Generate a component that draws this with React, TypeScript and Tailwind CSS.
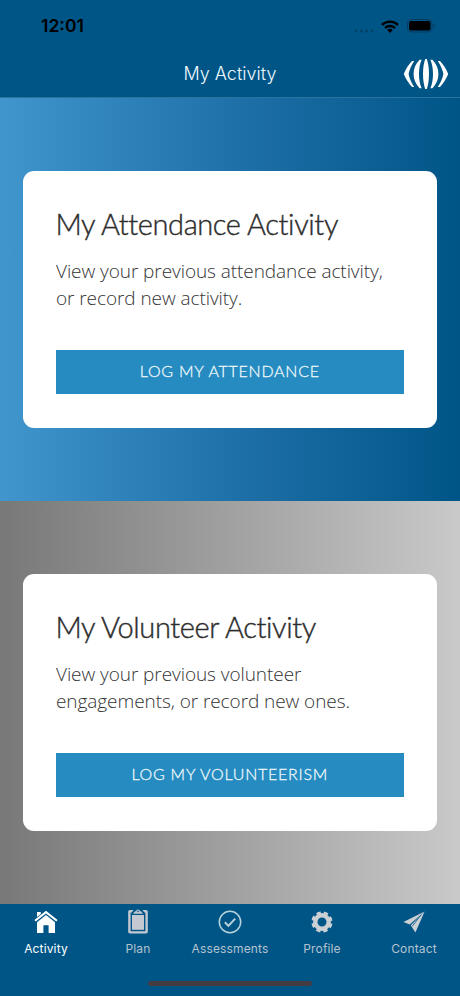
import type { ReactNode } from 'react'

interface ActivityCardProps {
  title: string
  lines: string[]
  action: string
}

function ActivityCard({ title, lines, action }: ActivityCardProps) {
  return (
    <div className="h-[257px] w-full rounded-[11px] bg-white px-[33px] pt-[34px]">
      <h2 className="font-['Lato',sans-serif] text-[29px] leading-[38px] font-light tracking-[-0.4px] whitespace-nowrap text-[#2d2d2d] [-webkit-text-stroke:0.4px_#2d2d2d]">{title}</h2>
      <p className="mt-[15px] ml-[0.5px] font-['Open_Sans',sans-serif] text-[19px] leading-[27px] font-light tracking-[-0.07px] whitespace-nowrap text-[#333333]">
        {lines.map((line) => (
          <span key={line} className="block">{line}</span>
        ))}
      </p>
      <button className="mt-[38px] flex h-[44px] w-full items-center justify-center bg-[#258bc0] pb-[2px] font-['Lato',sans-serif] text-[16px] font-light tracking-[0.75px] whitespace-nowrap text-[#eef8fc] [-webkit-text-stroke:0.3px_#eef8fc]">
        {action}
      </button>
    </div>
  )
}

function StatusIcons() {
  return (
    <div className="flex items-center">
      <svg width="20" height="4" viewBox="0 0 20 4" className="mt-[9px] mr-[7px]" fill="#04406a">
        <circle cx="2" cy="2" r="1.5" />
        <circle cx="7.3" cy="2" r="1.5" />
        <circle cx="12.6" cy="2" r="1.5" />
        <circle cx="17.9" cy="2" r="1.5" />
      </svg>
      <svg width="18" height="13" viewBox="0 0 18 13" className="mr-[8px]" fill="none" stroke="#000" strokeWidth="2.4">
        <path d="M1 4.9a11.4 11.4 0 0 1 16 0" />
        <path d="M4 8a7.1 7.1 0 0 1 10 0" />
        <path d="M9 13 6.2 10.1a4 4 0 0 1 5.6 0z" fill="#000" stroke="none" />
      </svg>
      <svg width="29" height="14" viewBox="0 0 29 14">
        <rect x="0.5" y="0.5" width="24.5" height="12.5" rx="3.6" fill="none" stroke="#043c61" />
        <rect x="2" y="2" width="21.5" height="9.5" rx="2" fill="#000" />
        <path d="M26.6 4.6c1.8.8 1.8 3.6 0 4.4z" fill="#043c61" />
      </svg>
    </div>
  )
}

function Logo() {
  return (
    <svg width="46" height="32" viewBox="0 0 46 32" fill="#fff">
      <path d="M22.2 1h1.6C25.2 5 26 10 26 16s-.8 11-2.2 15h-1.6C20.8 27 20 22 20 16s.8-11 2.2-15z" />
      <path d="M16.6 1.8h2C16.8 6 16 11 16 16s.8 10 2.6 14.2h-2C12.6 26 10.6 21.5 10.6 16s2-10 6-14.2z" />
      <path d="M29.4 1.8h-2C29.2 6 30 11 30 16s-.8 10-2.6 14.2h2c4-4.2 6-8.7 6-14.2s-2-10-6-14.2z" />
      <path d="M9 3h2.2C8.4 7.5 6.4 11.5 5.6 16c.8 4.500 2.800 8.500 5.600 13H9C5.500 25.200 2.600 20.800.8 16 2.600 11.200 5.500 6.800 9 3z" />
      <path d="M37 3h-2.200c2.800 4.500 4.800 8.500 5.600 13-.8 4.500-2.800 8.500-5.600 13H37c3.500-3.800 6.400-8.200 8.200-13C43.400 11.200 40.500 6.800 37 3z" />
    </svg>
  )
}

const homeIcon = (
  <svg width="24" height="24" viewBox="0 0 24 24" fill="#fff">
    <path d="M12 .7.4 10.1l1.3 1.5L12 3.4l10.3 8.2 1.3-1.5z" />
    <path d="M3 2h3.800v1.900L3 7z" />
    <path d="M12 5.100 3 12.200V23h6.400v-7.800h5.200V23H21V12.200z" />
  </svg>
)

const planIcon = (
  <svg width="20" height="25" viewBox="0 0 20 25" fill="#c4c9d1">
    <path fillRule="evenodd" d="M2 1h3.5L3.7 3.6H2.6v18.6h14.8V3.6h-1.1L14.5 1H18c1.1 0 1.8.8 1.8 1.8v20c0 1-.7 1.7-1.8 1.7H2c-1.1 0-1.8-.7-1.8-1.7v-20C.2 1.8.9 1 2 1z" />
    <path d="M4 6h12v14.8H4z" />
    <path fillRule="evenodd" d="M5 4.8 7 2.3h1C8.2 1.2 9 .4 10 .4s1.8.8 2 1.9h1l2 2.5zM10 1.6a.8.8 0 1 0 0 1.6.8.8 0 0 0 0-1.6z" />
  </svg>
)

const assessmentsIcon = (
  <svg width="24" height="24" viewBox="0 0 24 24" fill="none" stroke="#b9d3dd">
    <circle cx="12" cy="12" r="10.7" strokeWidth="1.5" />
    <path d="m6.8 12.3 3.6 3.5 6.8-7.2" strokeWidth="1.9" />
  </svg>
)

const profileIcon = (
  <svg width="22" height="22" viewBox="0 0 22 22" fill="none" stroke="#cbd0d5">
    <circle cx="11" cy="11" r="6.7" strokeWidth="4.4" />
    <circle cx="11" cy="11" r="9.3" strokeWidth="2.6" strokeDasharray="4.3 3.004" strokeDashoffset="-1.5" />
  </svg>
)

const contactIcon = (
  <svg width="22" height="22" viewBox="0 0 22 22" fill="#cbd0d5">
    <path d="M21.6.4.4 11.1l6.3 2.5z" />
    <path d="M21.6.4 7.9 14.2v.2l4.5 7z" />
    <path d="M18 4 9.3 15.2" stroke="#005587" strokeWidth=".8" />
  </svg>
)

interface TabProps {
  label: string
  icon: ReactNode
  active?: boolean
}

const tabs: TabProps[] = [
  { label: 'Activity', icon: homeIcon, active: true },
  { label: 'Plan', icon: planIcon },
  { label: 'Assessments', icon: assessmentsIcon },
  { label: 'Profile', icon: profileIcon },
  { label: 'Contact', icon: contactIcon },
]

function Tab({ label, icon, active }: TabProps) {
  return (
    <div className="flex flex-1 flex-col items-center">
      <div className="flex h-[35px] items-center">{icon}</div>
      <span className={`mt-px text-[12px] leading-[18px] tracking-[0.15px] whitespace-nowrap ${active ? 'text-white' : 'text-[#b3c3ce]'}`}>{label}</span>
    </div>
  )
}

export default function App() {
  return (
    <div className="flex h-[996px] w-[460px] flex-col overflow-hidden bg-[#005587] font-['Inter',sans-serif]">
      <header className="h-[98px] shrink-0 border-b border-[#28749f]">
        <div className="flex h-[51px] items-center justify-between pt-px pr-[24px] pl-[41px]">
          <span className="text-[17.5px] font-semibold text-black">12:01</span>
          <StatusIcons />
        </div>
        <div className="grid h-[46px] grid-cols-[1fr_auto_1fr] items-center pr-[11px] pl-[11px]">
          <span />
          <h1 className="pb-px text-[18px] font-light text-[#edf8fd]">My Activity</h1>
          <div className="flex justify-end"><Logo /></div>
        </div>
      </header>
      <section className="flex h-[403px] shrink-0 items-center bg-linear-to-r/srgb from-[#4096cd] via-[#1f71a9] to-[#005587] pr-[23px] pl-[22.5px]">
        <ActivityCard
          title="My Attendance Activity"
          lines={['View your previous attendance activity,', 'or record new activity.']}
          action="LOG MY ATTENDANCE"
        />
      </section>
      <section className="flex h-[403px] shrink-0 items-center bg-linear-to-r/srgb from-[#787878] to-[#c9c9c9] pr-[23px] pl-[22.5px]">
        <ActivityCard
          title="My Volunteer Activity"
          lines={['View your previous volunteer', 'engagements, or record new ones.']}
          action="LOG MY VOLUNTEERISM"
        />
      </section>
      <nav className="flex h-[76px] shrink-0">
        {tabs.map((tab) => (
          <Tab key={tab.label} {...tab} />
        ))}
      </nav>
      <div className="mx-auto mt-[1px] h-[5px] w-[164px] rounded-full bg-[#443c43]" />
    </div>
  )
}
